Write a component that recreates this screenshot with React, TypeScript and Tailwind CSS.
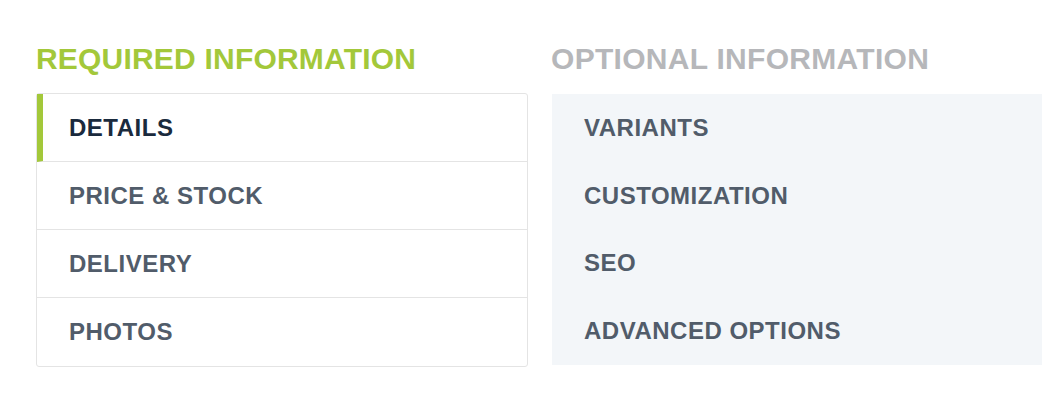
const required = ["DETAILS", "PRICE & STOCK", "DELIVERY", "PHOTOS"];
const optional = ["VARIANTS", "CUSTOMIZATION", "SEO", "ADVANCED OPTIONS"];

export default function App() {
  return (
    <div className="min-h-[399px] w-[1064px] bg-white pt-[41px] pl-9 font-['Liberation_Sans',Arial,sans-serif]">
      <div className="flex gap-6">
        <section className="w-[492px]">
          <h2 className="text-[30px] leading-9 font-bold tracking-[0.2px] text-[#a3c83a]">REQUIRED INFORMATION</h2>
          <ul className="mt-4 rounded-[3px] border border-[#e4e4e4] bg-white">
            {required.map((item, i) => (
              <li
                key={item}
                className={
                  "flex h-[68px] items-center text-[24px] font-bold tracking-[0.5px] " +
                  (i < required.length - 1 ? "border-b border-[#e4e4e4] " : "h-[67px] ") +
                  (i === 0
                    ? "border-l-[6px] border-l-[#a3c83a] pl-[26px] text-[#1a2a3d]"
                    : "pl-8 text-[#515c6a]")
                }
              >
                {item}
              </li>
            ))}
          </ul>
        </section>

        <section className="w-[490px]">
          <h2 className="-ml-px text-[30px] leading-9 font-bold tracking-[0.3px] text-[#b6b7ba]">OPTIONAL INFORMATION</h2>
          <ul className="mt-[17px] bg-[#f3f6f9]">
            {optional.map((item) => (
              <li
                key={item}
                className="flex h-[67.75px] items-center pl-8 text-[24px] font-bold tracking-[0.5px] text-[#515c6a]"
              >
                {item}
              </li>
            ))}
          </ul>
        </section>
      </div>
    </div>
  );
}
